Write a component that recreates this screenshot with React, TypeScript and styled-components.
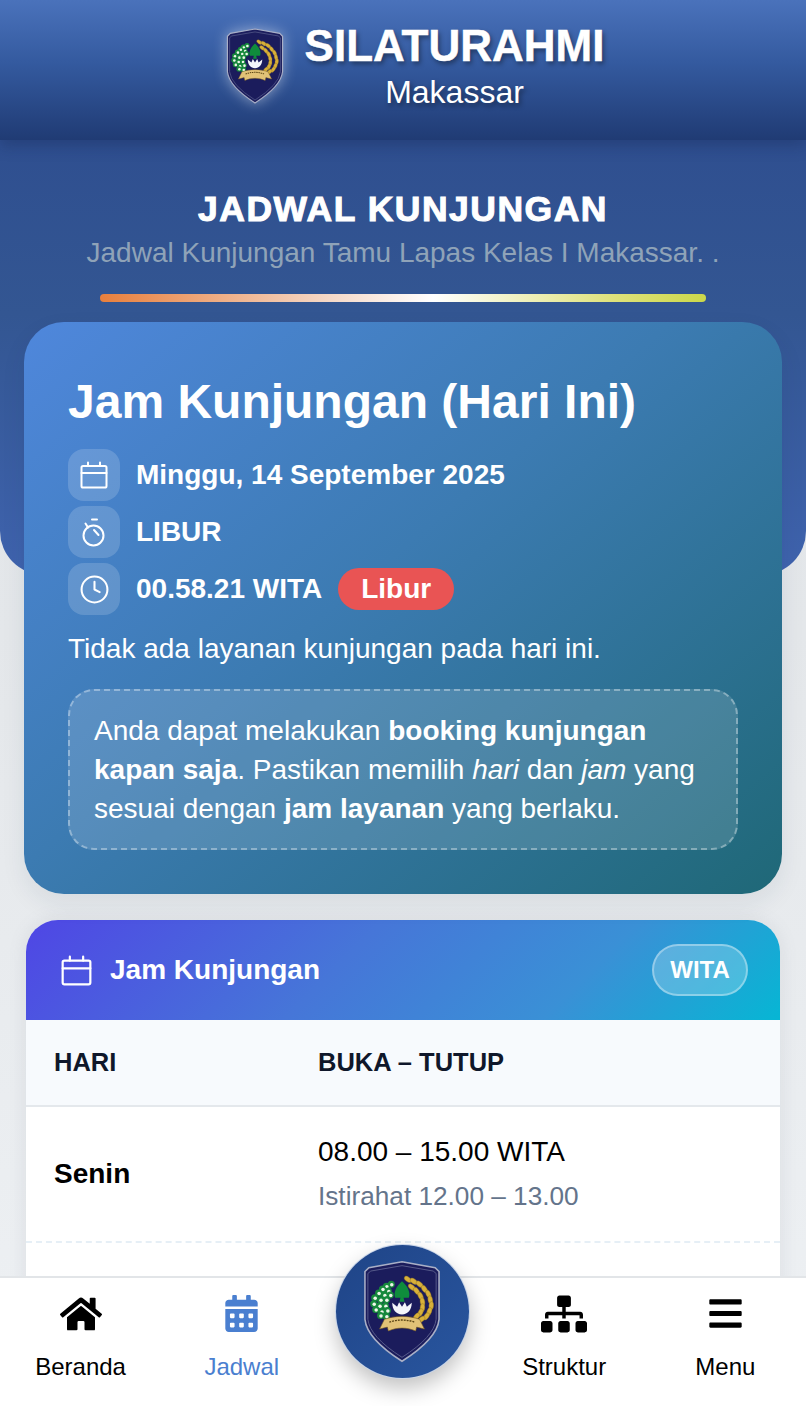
import React from "react";
import styled, { createGlobalStyle } from "styled-components";
import { FaHome, FaCalendarAlt, FaSitemap, FaBars } from "react-icons/fa";
import { Clock } from "lucide-react";

const Global = createGlobalStyle`
  html, body { margin: 0; padding: 0; }
  * { box-sizing: border-box; }
  body { font-family: "Liberation Sans", Arial, sans-serif; }
`;

const Page = styled.div`
  position: relative;
  width: 806px;
  height: 1406px;
  overflow: hidden;
  background: linear-gradient(180deg, #dfe3e7 0%, #e4e7ea 45%, #eef1f4 100%);
`;

const Header = styled.header`
  position: relative;
  z-index: 2;
  height: 140px;
  padding: 0 0 8px 24px;
  display: flex;
  align-items: center;
  justify-content: center;
  gap: 21px;
  background: linear-gradient(180deg, #4a72bb 0%, #345a9f 45%, #203b74 100%);
  box-shadow: 0 6px 14px rgba(16, 32, 72, 0.3);
`;

const HeaderLogo = styled.div`
  width: 58px;
  height: 78px;
  display: flex;
  filter: drop-shadow(0 0 7px rgba(255, 255, 255, 0.45));
`;

const Brand = styled.div`
  display: flex;
  flex-direction: column;
  align-items: center;
  color: #fff;
  text-shadow: 2px 3px 5px rgba(0, 0, 0, 0.4);
`;

const BrandName = styled.div`
  font-size: 44px;
  line-height: 50px;
  font-weight: 700;
  -webkit-text-stroke: 0.5px #fff;
`;

const BrandCity = styled.div`
  margin-top: 2px;
  font-size: 32px;
  line-height: 38px;
`;

const Hero = styled.section`
  height: 435px;
  padding-top: 49px;
  display: flex;
  flex-direction: column;
  align-items: center;
  border-radius: 0 0 44px 44px;
  background: linear-gradient(180deg, #2f4f90 0%, #335692 40%, #3f63ae 100%);
`;

const HeroTitle = styled.h1`
  margin: 0;
  font-size: 35.5px;
  line-height: 40px;
  font-weight: 700;
  letter-spacing: 1.5px;
  color: #fff;
  -webkit-text-stroke: 1px #fff;
`;

const HeroSub = styled.p`
  margin: 6px 0 0;
  font-size: 28px;
  line-height: 36px;
  color: #8fa3b8;
`;

const Rainbow = styled.div`
  margin-top: 23px;
  width: 606px;
  height: 8px;
  border-radius: 4px;
  background: linear-gradient(90deg, #e87f3c 0%, #f5d9c8 38%, #ffffff 55%, #dfe27a 85%, #cbd84a 100%);
`;

const TodayCard = styled.section`
  position: relative;
  margin: -253px 24px 0;
  height: 572px;
  padding: 50px 44px 0;
  border-radius: 40px;
  color: #fff;
  background: linear-gradient(140deg, #4f87dc 0%, #3c7bb2 45%, #1f6877 100%);
  box-shadow: 0 10px 24px rgba(30, 50, 80, 0.08);
`;

const TodayTitle = styled.h2`
  margin: 0 0 17px;
  font-size: 48px;
  line-height: 60px;
  font-weight: 700;
`;

const InfoList = styled.div`
  display: flex;
  flex-direction: column;
  gap: 5px;
`;

const InfoRow = styled.div`
  display: flex;
  align-items: center;
  gap: 16px;
  font-size: 28px;
  font-weight: 700;
`;

const InfoIcon = styled.span`
  width: 52px;
  height: 52px;
  display: flex;
  align-items: center;
  justify-content: center;
  border-radius: 16px;
  background: rgba(255, 255, 255, 0.16);
`;

const ClosedBadge = styled.span`
  height: 42px;
  padding: 0 23px;
  display: flex;
  align-items: center;
  border-radius: 21px;
  background: #e95454;
`;

const TodayNote = styled.p`
  margin: 16px 0 22px;
  font-size: 28px;
  line-height: 36px;
`;

const InfoBox = styled.div`
  height: 161px;
  padding: 20px 24px;
  border: 2px dashed rgba(255, 255, 255, 0.35);
  border-radius: 26px;
  background: rgba(255, 255, 255, 0.14);
  font-size: 28px;
  line-height: 39px;
`;

const TableCard = styled.section`
  margin: 26px 26px 0;
  height: 486px;
  border-radius: 32px 32px 0 0;
  overflow: hidden;
  background: #fff;
  box-shadow: 0 0 18px rgba(110, 120, 135, 0.14);
`;

const TableHeader = styled.div`
  height: 100px;
  padding: 0 32px 0 35px;
  display: flex;
  align-items: center;
  gap: 18px;
  color: #fff;
  background: linear-gradient(135deg, #4f46e5 0%, #4676d8 42%, #3a90d6 72%, #06b6d4 100%);
`;

const TableTitle = styled.div`
  flex: 1;
  font-size: 28px;
  font-weight: 700;
`;

const ZonePill = styled.div`
  width: 96px;
  height: 52px;
  display: flex;
  align-items: center;
  justify-content: center;
  border-radius: 26px;
  border: 2px solid rgba(255, 255, 255, 0.35);
  background: rgba(255, 255, 255, 0.22);
  font-size: 24px;
  font-weight: 700;
`;

const Grid = styled.div<{ $head?: boolean }>`
  display: grid;
  grid-template-columns: 264px 1fr;
  align-items: center;
  padding: 0 28px;
  height: ${(p) => (p.$head ? "87px" : "136px")};
  background: ${(p) => (p.$head ? "#f7fafd" : "#fff")};
  border-bottom: 2px ${(p) => (p.$head ? "solid #e4e8ec" : "dashed #e6eff6")};
  color: ${(p) => (p.$head ? "#0f172a" : "#000")};
  font-size: ${(p) => (p.$head ? "25.5px" : "28px")};
  font-weight: ${(p) => (p.$head ? 700 : 400)};
`;

const DayName = styled.div`
  font-weight: 700;
`;

const HoursCell = styled.div`
  display: flex;
  flex-direction: column;
  gap: 8px;
`;

const Hours = styled.div`
  line-height: 36px;
`;

const Rest = styled.div`
  font-size: 26.2px;
  line-height: 36px;
  color: #64748b;
`;

const BottomNav = styled.nav`
  position: absolute;
  left: 0;
  right: 0;
  bottom: 0;
  height: 130px;
  display: grid;
  grid-template-columns: repeat(5, 1fr);
  background: #fff;
  border-top: 2px solid #e2e5e8;
`;

const NavItem = styled.div<{ $active?: boolean }>`
  display: flex;
  flex-direction: column;
  align-items: center;
  padding-top: 15px;
  font-size: 24px;
  color: ${(p) => (p.$active ? "#4a7fd0" : "#000")};
`;

const NavIcon = styled.div`
  height: 41px;
  display: flex;
  align-items: center;
  justify-content: center;
`;

const NavLabel = styled.div`
  margin-top: 18px;
  line-height: 30px;
`;

const CenterSlot = styled.div`
  position: relative;
`;

const CenterBadge = styled.div`
  position: absolute;
  left: 50%;
  top: -33px;
  width: 133px;
  height: 133px;
  margin-left: -67px;
  display: flex;
  align-items: center;
  justify-content: center;
  border-radius: 50%;
  background: linear-gradient(135deg, #1f4487, #29569f);
  box-shadow: 0 0 0 1px #c9d6ea, 0 10px 22px rgba(0, 0, 0, 0.25);
`;

const CenterLogo = styled.div`
  width: 78px;
  height: 103px;
  display: flex;
`;

const cotton: [number, number][] = [
  [29, 24], [24, 26], [20, 29], [26, 31], [16, 33], [22, 35], [28, 35], [12, 38], [18, 40],
  [24, 40], [11, 44], [17, 46], [23, 46], [13, 50], [19, 52], [25, 51], [18, 56], [24, 57],
];
const rice: [number, number, number][] = [
  [46, 19, 35], [52, 21, 35], [58, 24, 40], [63, 29, 55], [67, 34, 65], [69, 40, 80], [70, 46, 95],
  [68, 52, 110], [65, 57, 125], [60, 60, 140], [50, 27, 40], [55, 31, 55], [59, 36, 65], [61, 42, 80],
  [61, 48, 95], [59, 53, 115], [55, 57, 130],
];

const Crest = () => (
  <svg viewBox="0 0 80 104" width="100%" height="100%" aria-hidden="true">
    <path d="M40 1 L74 7 L78 11 V60 Q76 80 40 103 Q4 80 2 60 V11 L6 7 Z" fill="#1b1c5c" stroke="#a9afc6" strokeWidth="1.6" />
    <path d="M40 5 L72 10.5 L75 13 V60 Q73 78 40 99 Q7 78 5 60 V13 L8 10.5 Z" fill="none" stroke="#585d8c" strokeWidth="1" />
    {cotton.map(([x, y], i) => (
      <g key={i}>
        <circle cx={x} cy={y} r="3.6" fill="#178a3c" />
        <circle cx={x + 0.5} cy={y + 0.5} r="1.8" fill="#eef6ea" />
      </g>
    ))}
    {rice.map(([x, y, r], i) => (
      <ellipse key={i} cx={x} cy={y} rx="4.2" ry="2.4" fill="#d8b03a" stroke="#8a6d1e" strokeWidth="0.4" transform={`rotate(${r} ${x} ${y})`} />
    ))}
    <path d="M40 21 C34 26 31 33 33 38 H38.4 L37.4 42 H42.6 L41.6 38 H47 C49 33 46 26 40 21 Z" fill="#0f8c3c" />
    <path d="M30 43 L35 47 L37 42.5 L40 47 L43 42.5 L45 47 L50 43 C50 50 46 55 40 55 C34 55 30 50 30 43 Z" fill="#f4f5fa" />
    <path d="M22 60 L17 70 L25 68 L26 72 C35 68 45 68 54 72 L55 68 L63 70 L58 60 C47 56 33 56 22 60 Z" fill="#e2c277" stroke="#7a5d20" strokeWidth="0.6" />
    <path d="M27 63 C35 60 45 60 53 63" fill="none" stroke="#5d4716" strokeWidth="1.4" strokeDasharray="2 1" />
  </svg>
);

const CalendarGlyph = ({ size }: { size: number }) => (
  <svg viewBox="0 0 28 28" width={size} height={size} fill="none" stroke="currentColor" strokeWidth="2" strokeLinecap="round" aria-hidden="true">
    <rect x="1.5" y="5" width="25" height="21.5" rx="1.6" />
    <path d="M1.5 12H26.5M8 1.5V5M20 1.5V5" />
  </svg>
);

const TimerGlyph = () => (
  <svg viewBox="0 0 28 32" width="28" height="32" fill="none" stroke="currentColor" strokeWidth="2" strokeLinecap="round" aria-hidden="true">
    <circle cx="13.5" cy="19.5" r="10" />
    <path d="M12 3.5H17M5.5 7.5L8 11.5M14 14L18.5 19" />
  </svg>
);

export default function App() {
  return (
    <Page>
      <Global />
      <Header>
        <HeaderLogo><Crest /></HeaderLogo>
        <Brand>
          <BrandName>SILATURAHMI</BrandName>
          <BrandCity>Makassar</BrandCity>
        </Brand>
      </Header>
      <Hero>
        <HeroTitle>JADWAL KUNJUNGAN</HeroTitle>
        <HeroSub>Jadwal Kunjungan Tamu Lapas Kelas I Makassar. .</HeroSub>
        <Rainbow />
      </Hero>
      <TodayCard>
        <TodayTitle>Jam Kunjungan (Hari Ini)</TodayTitle>
        <InfoList>
          <InfoRow>
            <InfoIcon><CalendarGlyph size={28} /></InfoIcon>
            Minggu, 14 September 2025
          </InfoRow>
          <InfoRow>
            <InfoIcon><TimerGlyph /></InfoIcon>
            LIBUR
          </InfoRow>
          <InfoRow>
            <InfoIcon><Clock size={31} strokeWidth={1.6} /></InfoIcon>
            00.58.21 WITA
            <ClosedBadge>Libur</ClosedBadge>
          </InfoRow>
        </InfoList>
        <TodayNote>Tidak ada layanan kunjungan pada hari ini.</TodayNote>
        <InfoBox>
          Anda dapat melakukan <b>booking kunjungan kapan saja</b>. Pastikan memilih <i>hari</i> dan <i>jam</i> yang sesuai dengan <b>jam layanan</b> yang berlaku.
        </InfoBox>
      </TodayCard>
      <TableCard>
        <TableHeader>
          <CalendarGlyph size={31} />
          <TableTitle>Jam Kunjungan</TableTitle>
          <ZonePill>WITA</ZonePill>
        </TableHeader>
        <Grid $head>
          <div>HARI</div>
          <div>BUKA – TUTUP</div>
        </Grid>
        <Grid>
          <DayName>Senin</DayName>
          <HoursCell>
            <Hours>08.00 – 15.00 WITA</Hours>
            <Rest>Istirahat 12.00 – 13.00</Rest>
          </HoursCell>
        </Grid>
      </TableCard>
      <BottomNav>
        <NavItem>
          <NavIcon><FaHome size={42} /></NavIcon>
          <NavLabel>Beranda</NavLabel>
        </NavItem>
        <NavItem $active>
          <NavIcon><FaCalendarAlt size={37} /></NavIcon>
          <NavLabel>Jadwal</NavLabel>
        </NavItem>
        <CenterSlot>
          <CenterBadge><CenterLogo><Crest /></CenterLogo></CenterBadge>
        </CenterSlot>
        <NavItem>
          <NavIcon><FaSitemap size={46} /></NavIcon>
          <NavLabel>Struktur</NavLabel>
        </NavItem>
        <NavItem>
          <NavIcon><FaBars size={37} /></NavIcon>
          <NavLabel>Menu</NavLabel>
        </NavItem>
      </BottomNav>
    </Page>
  );
}
